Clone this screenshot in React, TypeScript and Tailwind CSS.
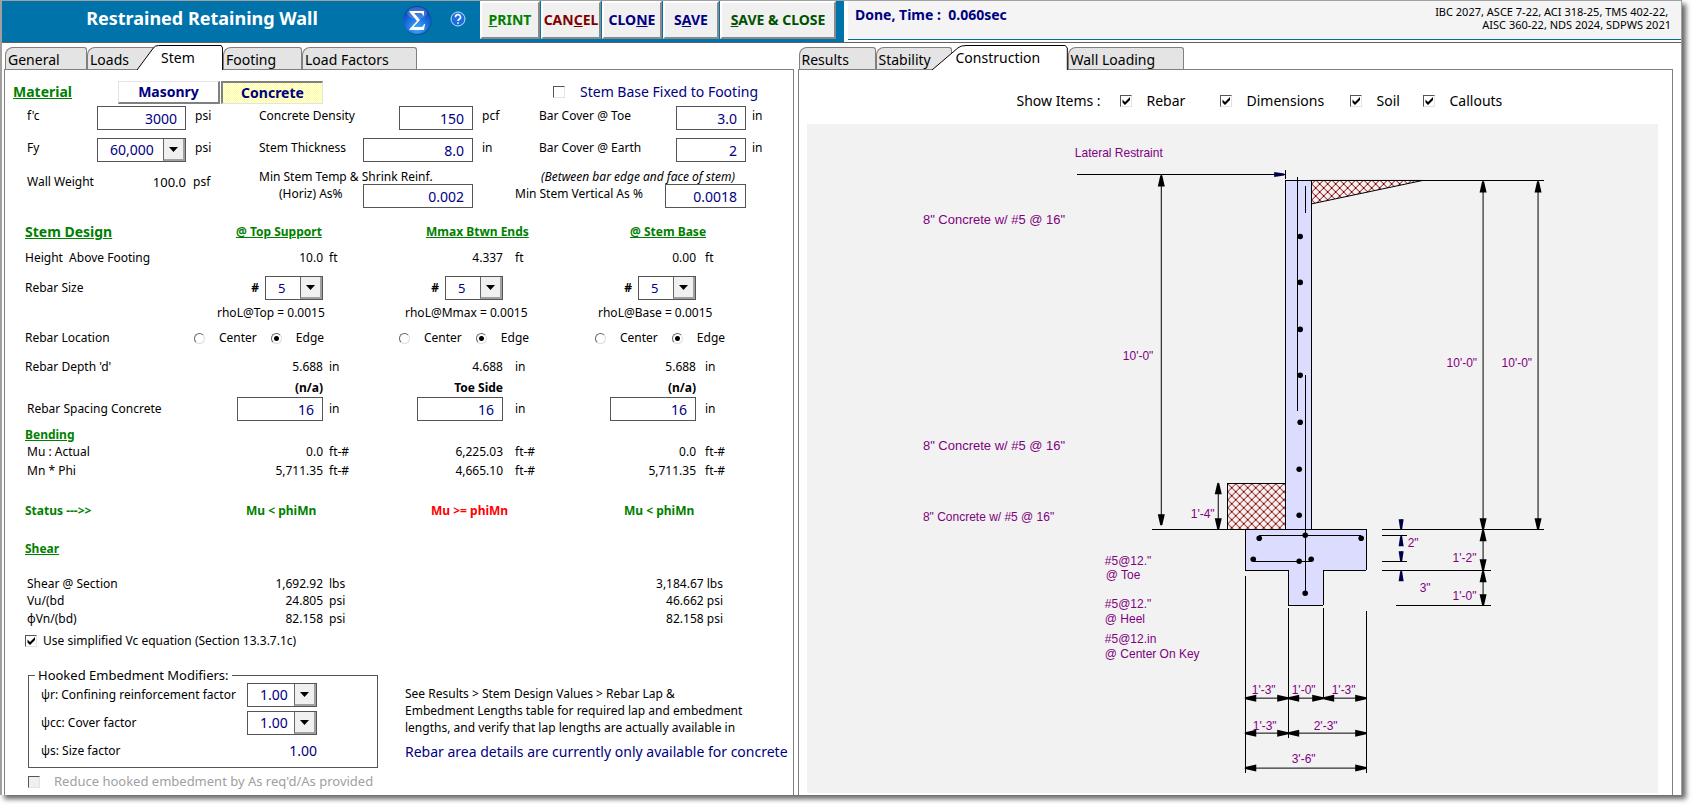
import React, { useState } from 'react';

const FIELD = 'h-6 border border-[#555] bg-white pr-2 text-right text-sm text-[#000080] outline-none';

// Text box with a label tied to it through aria-label
function Field({ label, value, className }: any) {
    return <input aria-label={label} defaultValue={value} className={`${FIELD} ${className}`} />;
}

// Drop-down with the classic raised arrow button
function Combo({ label, value, className, size = 'text-sm' }: any) {
    return (
        <span className={`relative inline-flex h-6 border border-[#555] bg-white ${className}`}>
            <select aria-label={label} defaultValue={value} className={`w-full appearance-none bg-transparent pl-3 text-[#000080] outline-none ${size}`}>
                <option>{value}</option>
            </select>
            <span className="pointer-events-none absolute inset-y-0 right-0 flex w-[22px] items-center justify-center border-b-2 border-l border-r-2 border-b-[#a0a0a0] border-l-[#666] border-r-[#a0a0a0] bg-[#f0f0f0]">
                <svg width="9" height="5" viewBox="0 0 9 5"><path d="M0 0h9L4.5 5z" /></svg>
            </span>
        </span>
    );
}

function Check({ label, checked = false, disabled = false, className = '' }: any) {
    return (
        <label className={`flex items-center ${className}`}>
            <span className="relative flex">
                <input
                    type="checkbox"
                    defaultChecked={checked}
                    disabled={disabled}
                    className="peer h-3 w-3 appearance-none border border-b-[#e3e3e3] border-l-[#555] border-r-[#e3e3e3] border-t-[#555] bg-white disabled:bg-[#f0f0f0]"
                />
                <svg className="pointer-events-none absolute inset-0 hidden peer-checked:block" width="12" height="12" viewBox="0 0 12 12">
                    <path d="M2.5 4.5v3L5 10l5-5V2L5 7z" />
                </svg>
            </span>
            <span>{label}</span>
        </label>
    );
}

function Radio({ name, label, checked = false }: any) {
    return (
        <label className="flex items-center gap-[14px]">
            <input
                type="radio"
                name={name}
                defaultChecked={checked}
                className="h-[11px] w-[11px] appearance-none rounded-full border border-b-[#ddd] border-l-[#666] border-r-[#ddd] border-t-[#666] bg-white checked:bg-[radial-gradient(circle,#000_2px,transparent_3px)]"
            />
            {label}
        </label>
    );
}

// Row of tabs; the active one has a slanted left edge over its neighbour
function Tabs({ items, active, onPick }: any) {
    return (
        <div className="flex h-[26px] items-end pl-px text-sm">
            {items.map((t: any) =>
                t.name === active ? (
                    <button key={t.name} onClick={() => onPick(t.name)} className={`relative z-10 -mb-px -ml-5 h-[25px] pl-6 text-left leading-6 ${t.w}`}>
                        <svg className="absolute inset-0 h-full w-full" viewBox="0 0 100 25" preserveAspectRatio="none">
                            <path d="M0 25L19 3Q21 .5 25 .5H98L99.5 3V25" fill="#fff" stroke="#000" vectorEffect="non-scaling-stroke" />
                        </svg>
                        <span className="relative">{t.name}</span>
                    </button>
                ) : (
                    <button
                        key={t.name}
                        onClick={() => onPick(t.name)}
                        className={`h-[22px] whitespace-nowrap rounded-tl-lg rounded-tr-[3px] border border-b-0 border-[#808080] bg-[#e4e4e4] pl-[2px] pt-[2px] text-left leading-5 ${t.w}`}
                    >
                        {t.name}
                    </button>
                )
            )}
        </div>
    );
}

function Header() {
    const btn = 'h-[38px] border-2 border-b-[#8a8a8a] border-l-white border-r-[#8a8a8a] border-t-white bg-[#f0f0f0] text-center text-sm font-bold';
    return (
        <header className="flex h-[42px] border-b border-[#606060]">
            <div className="flex w-[842px] shrink-0 bg-[#0173ab]">
                <h1 className="w-[400px] pt-[3px] text-center text-lg font-bold text-white">Restrained Retaining Wall</h1>
                <button aria-label="Calculate" className="mr-[18px] self-start pt-1">
                    <svg width="30" height="30" viewBox="0 0 30 30">
                        <defs>
                            <radialGradient id="ball" cx="50%" cy="80%" r="80%">
                                <stop offset="0" stopColor="#3fa9ff" />
                                <stop offset="0.6" stopColor="#1565d8" />
                                <stop offset="1" stopColor="#0b3fa8" />
                            </radialGradient>
                        </defs>
                        <circle cx="15.500" cy="16" r="14" fill="#07538a" />
                        <circle cx="15" cy="15" r="14" fill="url(#ball)" />
                        <ellipse cx="15" cy="8" rx="10" ry="6" fill="#fff" opacity="0.18" />
                        <path d="M7.500 6H22v4.500h-1C20.500 8.500 19.500 8 18 8h-6l6 7-6.500 7H19c1.700 0 2.500-1 3-3h1L22 25H7.500v-1L15 16 7.500 7z" fill="#fff" />
                    </svg>
                </button>
                <button aria-label="Help" className="mr-[14px] self-start pt-[10px]">
                    <svg width="16" height="16" viewBox="0 0 16 16">
                        <circle cx="8" cy="8" r="7" fill="#1c6fe0" stroke="#bfe0ff" />
                        <path d="M5.500 6.200a2.500 2.500 0 1 1 3.700 2.100Q8 9 8 10M8 11.300v1.400" fill="none" stroke="#fff" strokeWidth="1.600" />
                    </svg>
                </button>
                <div className="flex gap-px">
                    <button className={`${btn} w-[60px] text-[#008000]`}><u>P</u>RINT</button>
                    <button className={`${btn} w-[60px] text-[#800000]`}>CAN<u>C</u>EL</button>
                    <button className={`${btn} w-[60px] text-[#000080]`}>CLO<u>N</u>E</button>
                    <button className={`${btn} w-[56px] text-[#000080]`}>S<u>A</u>VE</button>
                    <button className={`${btn} w-[116px] text-[#005000]`}><u>S</u>AVE &amp; CLOSE</button>
                </div>
            </div>
            <div className="mb-[2px] ml-1 flex flex-1 justify-between border-b border-[#0b6a8f] bg-[#f4f4f4] pl-[7px] pr-[10px]">
                <p className="whitespace-pre pt-1 text-sm font-bold text-[#000080]">Done, Time :  0.060sec</p>
                <p className="pt-1 text-right text-[11px] leading-[13px]">
                    IBC 2027, ASCE 7-22, ACI 318-25, TMS 402-22,&nbsp;<br />AISC 360-22, NDS 2024, SDPWS 2021
                </p>
            </div>
        </header>
    );
}

function Material() {
    return (
        <section>
            <div className="flex h-[34px] items-center pl-2 pt-[10px]">
                <h2 className="w-[105px] text-sm font-bold text-[#008000] underline">Material</h2>
                <button className="h-[23px] w-[102px] border border-b-2 border-r-2 border-b-[#808080] border-l-[#e3e3e3] border-r-[#808080] border-t-[#e3e3e3] text-sm font-bold text-[#000080]">Masonry</button>
                <button className="ml-px h-[23px] w-[102px] border border-l-2 border-t-2 border-b-[#e3e3e3] border-l-[#808080] border-r-[#e3e3e3] border-t-[#808080] bg-[repeating-conic-gradient(#ffff80_0_25%,#ffffff_0_50%)] bg-[length:2px_2px] text-sm font-bold text-[#000080]">Concrete</button>
                <Check label="Stem Base Fixed to Footing" className="ml-[230px] gap-[15px] text-sm text-[#000080]" />
            </div>
            <div className="flex pl-[22px] pt-[2px] leading-5">
                <div className="flex w-[232px] flex-col gap-2">
                    <div className="flex h-6 items-start">
                        <span className="w-[70px]">f'c</span>
                        <Field label="f'c" value="3000" className="w-[89px]" />
                        <span className="pl-[9px]">psi</span>
                    </div>
                    <div className="flex h-6 items-start">
                        <span className="w-[70px]">Fy</span>
                        <Combo label="Fy" value="60,000" className="w-[89px]" />
                        <span className="pl-[9px]">psi</span>
                    </div>
                    <div className="flex h-6 items-center">
                        <span className="w-[90px]">Wall Weight</span>
                        <span className="w-[69px] text-right text-[13px]">100.0</span>
                        <span className="pl-[7px]">psf</span>
                    </div>
                </div>
                <div className="flex w-[256px] flex-col gap-2">
                    <div className="flex h-6 items-start">
                        <span className="w-[140px]">Concrete Density</span>
                        <Field label="Concrete Density" value="150" className="w-[74px]" />
                        <span className="pl-[9px]">pcf</span>
                    </div>
                    <div className="flex h-6 items-start">
                        <span className="w-[104px]">Stem Thickness</span>
                        <Field label="Stem Thickness" value="8.0" className="w-[110px]" />
                        <span className="pl-[9px]">in</span>
                    </div>
                    <div>
                        <p className="leading-[14px]">Min Stem Temp &amp; Shrink Reinf.</p>
                        <div className="flex">
                            <span className="w-[104px] pl-5">(Horiz) As%</span>
                            <Field label="Min stem horizontal As%" value="0.002" className="w-[110px]" />
                        </div>
                    </div>
                </div>
                <div className="flex flex-1 flex-col gap-2">
                    <div className="flex h-6 items-start pl-6">
                        <span className="w-[137px]">Bar Cover @ Toe</span>
                        <Field label="Bar Cover @ Toe" value="3.0" className="w-[70px]" />
                        <span className="pl-[6px]">in</span>
                    </div>
                    <div className="flex h-6 items-start pl-6">
                        <span className="w-[137px]">Bar Cover @ Earth</span>
                        <Field label="Bar Cover @ Earth" value="2" className="w-[70px]" />
                        <span className="pl-[6px]">in</span>
                    </div>
                    <div>
                        <p className="pl-[26px] italic leading-[14px]">(Between bar edge and face of stem)</p>
                        <div className="flex">
                            <span className="w-[150px]">Min Stem Vertical As %</span>
                            <Field label="Min Stem Vertical As %" value="0.0018" className="w-[81px]" />
                        </div>
                    </div>
                </div>
            </div>
        </section>
    );
}

const columns = [
    { id: 'top', title: '@ Top Support', rho: 'rhoL@Top = 0.0015', height: '10.0', depth: '5.688', tag: '(n/a)', pad: 'pl-[46px]', rhoPad: 'pl-[27px]', radioPad: 'pl-1' },
    { id: 'mmax', title: 'Mmax Btwn Ends', rho: 'rhoL@Mmax = 0.0015', height: '4.337', depth: '4.688', tag: 'Toe Side', pad: 'pl-[31px]', rhoPad: 'pl-[10px]', radioPad: 'pl-1' },
    { id: 'base', title: '@ Stem Base', rho: 'rhoL@Base = 0.0015', height: '0.00', depth: '5.688', tag: '(n/a)', pad: 'pl-[42px]', rhoPad: 'pl-[10px]', radioPad: 'pl-[7px]' },
];

const unitPad = ['pl-[6px]', 'pl-3', 'pl-[9px]'];

// One label followed by three value + unit pairs
function ValueRow({ label, values, unit, className, indent = '' }: any) {
    return (
        <tr className={className}>
            <th className={`text-left font-normal ${indent}`}>{label}</th>
            {values.map((v: any, i: number) => (
                <React.Fragment key={i}>
                    <td className="text-right">{v}</td>
                    <td className={unitPad[i]}>{v && unit}</td>
                </React.Fragment>
            ))}
        </tr>
    );
}

function ShearRow({ label, top, base, className }: any) {
    return (
        <tr className={className}>
            <th className="pl-[2px] text-left font-normal">{label}</th>
            <td className="text-right">{top[0]}</td>
            <td className="pl-[6px]">{top[1]}</td>
            <td colSpan={2}></td>
            <td colSpan={2}><div className="w-[135px] text-right">{base}</div></td>
        </tr>
    );
}

function StemDesign() {
    return (
        <table className="ml-5 mt-3 w-[760px] table-fixed whitespace-nowrap leading-4">
            <colgroup>
                <col className="w-[165px]" />
                <col className="w-[133px]" />
                <col className="w-[72px]" />
                <col className="w-[108px]" />
                <col className="w-[85px]" />
                <col className="w-[108px]" />
                <col />
            </colgroup>
            <tbody>
                <tr className="h-6 text-[#008000]">
                    <th className="text-left text-sm font-bold underline">Stem Design</th>
                    {columns.map((c) => (
                        <th key={c.id} colSpan={2} className={`text-left font-bold underline ${c.pad}`}>{c.title}</th>
                    ))}
                </tr>
                <ValueRow label={<>Height&nbsp; Above Footing</>} values={columns.map((c) => c.height)} unit="ft" className="h-7" />
                <tr className="h-8">
                    <th className="text-left font-normal">Rebar Size</th>
                    {columns.map((c) => (
                        <React.Fragment key={c.id}>
                            <td>
                                <div className="flex items-center justify-end gap-[6px]">
                                    <b>#</b>
                                    <Combo label={`Rebar size ${c.title}`} value="5" size="text-[13px]" className="w-[58px]" />
                                </div>
                            </td>
                            <td></td>
                        </React.Fragment>
                    ))}
                </tr>
                <tr className="h-[17px]">
                    <td></td>
                    {columns.map((c) => (
                        <td key={c.id} colSpan={2} className={c.rhoPad}>{c.rho}</td>
                    ))}
                </tr>
                <tr className="h-[34px]">
                    <th className="text-left font-normal">Rebar Location</th>
                    {columns.map((c) => (
                        <td key={c.id} colSpan={2} className={c.radioPad}>
                            <div className="flex gap-[14px]">
                                <Radio name={c.id} label="Center" />
                                <Radio name={c.id} label="Edge" checked />
                            </div>
                        </td>
                    ))}
                </tr>
                <ValueRow label="Rebar Depth 'd'" values={columns.map((c) => c.depth)} unit="in" className="h-[23px]" />
                <tr className="h-[19px]">
                    <td></td>
                    {columns.map((c) => (
                        <React.Fragment key={c.id}>
                            <td className="text-right font-bold">{c.tag}</td>
                            <td></td>
                        </React.Fragment>
                    ))}
                </tr>
                <ValueRow
                    label="Rebar Spacing Concrete"
                    indent="pl-[2px]"
                    values={columns.map((c) => <Field key={c.id} label={`Rebar spacing ${c.title}`} value="16" className="w-[86px] align-top" />)}
                    unit="in"
                    className="h-6"
                />
                <tr className="h-[22px] align-bottom text-[#008000]">
                    <th colSpan={7} className="text-left font-bold underline">Bending</th>
                </tr>
                <ValueRow label="Mu : Actual" indent="pl-[2px]" values={['0.0', '6,225.03', '0.0']} unit="ft-#" className="h-[18px]" />
                <ValueRow label="Mn * Phi" indent="pl-[2px]" values={['5,711.35', '4,665.10', '5,711.35']} unit="ft-#" className="h-5" />
                <tr className="h-[59px] text-left text-[#008000]">
                    <th className="font-bold">Status ---&gt;&gt;</th>
                    <th colSpan={2} className="pl-14 font-bold">Mu &lt; phiMn</th>
                    <th colSpan={2} className="pl-9 font-bold text-[#ff0000]">Mu &gt;= phiMn</th>
                    <th colSpan={2} className="pl-9 font-bold">Mu &lt; phiMn</th>
                </tr>
                <tr className="h-[18px] text-[#008000]">
                    <th colSpan={7} className="text-left font-bold underline">Shear</th>
                </tr>
                <ShearRow label="Shear @ Section" top={['1,692.92', 'lbs']} base="3,184.67 lbs" className="h-[34px] align-bottom" />
                <ShearRow label="Vu/(bd" top={['24.805', 'psi']} base="46.662 psi" className="h-[18px]" />
                <ShearRow label="φVn/(bd)" top={['82.158', 'psi']} base="82.158 psi" className="h-[17px]" />
            </tbody>
        </table>
    );
}

function Embedment() {
    return (
        <section className="pl-5 pt-[2px]">
            <Check label="Use simplified Vc equation (Section 13.3.7.1c)" checked className="h-6 gap-[6px]" />
            <div className="flex gap-[27px] pl-[3px] pt-[14px]">
                <fieldset className="h-[101px] w-[350px] shrink-0 border border-[#555] pl-3">
                    <legend className="-ml-[6px] px-[3px] text-[13px] leading-4">Hooked Embedment Modifiers:</legend>
                    <div className="flex h-6 items-center">
                        <span className="w-[206px]">ψr: Confining reinforcement factor</span>
                        <Combo label="Confining reinforcement factor" value="1.00" className="w-[70px]" />
                    </div>
                    <div className="mt-1 flex h-6 items-center">
                        <span className="w-[206px]">ψcc: Cover factor</span>
                        <Combo label="Cover factor" value="1.00" className="w-[70px]" />
                    </div>
                    <div className="mt-1 flex h-6 items-center">
                        <span className="w-[206px]">ψs: Size factor</span>
                        <span className="w-[70px] text-right text-sm text-[#000080]">1.00</span>
                    </div>
                </fieldset>
                <div className="whitespace-nowrap pt-[18px] leading-[17px]">
                    <p>
                        See Results &gt; Stem Design Values &gt; Rebar Lap &amp;<br />
                        Embedment Lengths table for required lap and embedment<br />
                        lengths, and verify that lap lengths are actually available in
                    </p>
                    <p className="mt-[6px] text-sm text-[#000080]">Rebar area details are currently only available for concrete</p>
                </div>
            </div>
            <Check label="Reduce hooked embedment by As req'd/As provided" disabled className="mt-[2px] h-6 gap-[14px] pl-[3px] text-[13px] text-[#a0a0a0]" />
        </section>
    );
}

// Arrowhead with its tip at x,y, pointing along the angle (0 = right)
function Head({ x, y, a, small }: any) {
    return (
        <polygon
            points={small ? '0,-1 -10,-2.500 -10,2.500 0,1' : '0,-1 -11,-3.500 -11,3.500 0,1'}
            transform={`translate(${x + 0.5} ${y + 0.5}) rotate(${a})`}
            fill={small ? '#00004a' : '#000'}
            stroke="none"
        />
    );
}

function HDim({ x1, x2, y }: any) {
    return <><path d={`M${x1} ${y}.5H${x2}`} /><Head x={x1} y={y} a={180} /><Head x={x2} y={y} a={0} /></>;
}

function VDim({ x, y1, y2 }: any) {
    return <><path d={`M${x}.5 ${y1}V${y2}`} /><Head x={x} y={y1} a={-90} /><Head x={x} y={y2} a={90} /></>;
}

const notes: [number, number, string, number?][] = [
    [1075, 157, 'Lateral Restraint'],
    [923, 224, '8" Concrete w/ #5 @ 16"', 13],
    [923, 450, '8" Concrete w/ #5 @ 16"', 13],
    [923, 521, '8" Concrete w/ #5 @ 16"'],
    [1105, 565, '#5@12."'],
    [1106, 579, '@ Toe'],
    [1105, 608, '#5@12."'],
    [1105, 623, '@ Heel'],
    [1105, 643, '#5@12.in'],
    [1105, 658, '@ Center On Key'],
    [1123, 360, `10'-0"`],
    [1447, 367, `10'-0"`],
    [1502, 367, `10'-0"`],
    [1191, 518, `1'-4"`],
    [1408, 547, '2"'],
    [1453, 562, `1'-2"`],
    [1420, 592, '3"'],
    [1453, 600, `1'-0"`],
    [1252, 694, `1'-3"`],
    [1292, 694, `1'-0"`],
    [1332, 694, `1'-3"`],
    [1253, 730, `1'-3"`],
    [1314, 730, `2'-3"`],
    [1292, 763, `3'-6"`],
];

const dots = [
    [1300, 236], [1300, 282], [1300, 329], [1300, 375], [1300, 422], [1299, 469], [1299, 515],
    [1305, 535], [1259, 538], [1361, 538], [1253, 559], [1311, 559], [1299, 561], [1305, 593],
];

function WallDrawing() {
    return (
        <svg className="h-full w-full bg-[#f2f2f2]" viewBox="807 124 852 669" preserveAspectRatio="xMidYMin meet">
            <defs>
                <pattern id="soil" width="8" height="8" patternUnits="userSpaceOnUse">
                    <rect width="8" height="8" fill="#f6f0f0" />
                    <path d="M0 0L8 8M8 0L0 8" stroke="#800000" />
                </pattern>
            </defs>
            <g fill="none" stroke="none">
                <path d="M1311.500 180.500H1423L1311.500 204z" fill="url(#soil)" stroke="#000" />
                <g stroke="#000" shapeRendering="crispEdges">
                    <rect x="1227.500" y="483.500" width="58" height="46" fill="url(#soil)" />
                    <rect x="1285.500" y="180.500" width="26" height="349" fill="#dcdcff" />
                    <path d="M1245.500 529.500H1366.500V570.500H1323.500V605.500H1288.500V570.500H1245.500z" fill="#dcdcff" />
                    <path d="M1285 180.500H1544M1152 529.500H1366M1077 174.500H1285M1285.500 170V179" />
                    <path d="M1297.500 177V411M1305.500 186V213M1305.500 375V593" />
                    <path d="M1259 535.500H1361M1253 561.500H1311" />
                    <path d="M1382 529.500H1544M1382 535.500H1407M1382 561.500H1407M1382 570.500H1491M1396 605.500H1491" />
                    <path d="M1245.500 576V773M1288.500 608V738M1323.500 608V698M1366.500 611V773" />
                    <path d="M1401.500 519V529M1401.500 536V546M1401.500 551V561M1401.500 571V581" />
                </g>
                <g stroke="#000">
                    <VDim x={1161} y1={175} y2={525} />
                    <VDim x={1483} y1={181} y2={529} />
                    <VDim x={1538} y1={181} y2={529} />
                    <VDim x={1483} y1={530} y2={570} />
                    <VDim x={1483} y1={571} y2={605} />
                    <VDim x={1218} y1={483} y2={529} />
                    <HDim x1={1245} x2={1288} y={698} />
                    <HDim x1={1288} x2={1323} y={698} />
                    <HDim x1={1323} x2={1366} y={698} />
                    <HDim x1={1245} x2={1288} y={733} />
                    <HDim x1={1288} x2={1366} y={733} />
                    <HDim x1={1245} x2={1366} y={768} />
                </g>
                <Head small x={1284} y={174} a={0} />
                <Head small x={1401} y={529} a={90} />
                <Head small x={1401} y={536} a={-90} />
                <Head small x={1401} y={561} a={90} />
                <Head small x={1401} y={571} a={-90} />
                {dots.map(([x, y]) => (
                    <circle key={`${x}-${y}`} cx={x + 0.5} cy={y + 0.5} r="2.800" fill="#000" />
                ))}
            </g>
            <g fill="#800080" fontFamily="'Liberation Sans', Arial, sans-serif">
                {notes.map(([x, y, text, size = 12]) => (
                    <text key={`${x}-${y}`} x={x} y={y} fontSize={size}>{text}</text>
                ))}
            </g>
        </svg>
    );
}

export default function App() {
    const [leftTab, setLeftTab] = useState('Stem');
    const [rightTab, setRightTab] = useState('Construction');

    return (
        <div className="h-screen overflow-hidden bg-white pb-4 pr-[15px] font-['Noto_Sans',sans-serif] text-xs text-black">
            <div className="flex h-full flex-col border-l-2 border-r border-t border-[#a0a0a0] bg-white shadow-[4px_4px_5px_rgba(0,0,0,0.6)]">
                <Header />
                <main className="grid min-h-0 flex-1 grid-cols-[790fr_876fr] gap-1 pl-[2px] pr-2">
                    <div className="flex min-h-0 min-w-0 flex-col">
                        <Tabs
                            active={leftTab}
                            onPick={setLeftTab}
                            items={[
                                { name: 'General', w: 'w-[82px]' },
                                { name: 'Loads', w: 'w-[70px]' },
                                { name: 'Stem', w: 'w-[86px]' },
                                { name: 'Footing', w: 'w-[79px]' },
                                { name: 'Load Factors', w: 'w-[115px]' },
                            ]}
                        />
                        <div className="min-h-0 flex-1 border border-b-0 border-[#808080]">
                            <Material />
                            <StemDesign />
                            <Embedment />
                        </div>
                    </div>
                    <div className="flex min-h-0 min-w-0 flex-col">
                        <Tabs
                            active={rightTab}
                            onPick={setRightTab}
                            items={[
                                { name: 'Results', w: 'w-[77px]' },
                                { name: 'Stability', w: 'w-[76px]' },
                                { name: 'Construction', w: 'w-[136px]' },
                                { name: 'Wall Loading', w: 'w-[116px]' },
                            ]}
                        />
                        <div className="flex min-h-0 flex-1 flex-col border border-b-0 border-[#808080] pb-[2px] pl-2 pr-[14px]">
                            <div className="flex h-[54px] shrink-0 items-center pl-[210px] pt-2 text-sm">
                                <span className="w-[103px]">Show Items :</span>
                                <Check label="Rebar" checked className="w-[100px] gap-[15px]" />
                                <Check label="Dimensions" checked className="w-[130px] gap-[15px]" />
                                <Check label="Soil" checked className="w-[73px] gap-[15px]" />
                                <Check label="Callouts" checked className="gap-[15px]" />
                            </div>
                            <div className="min-h-0 flex-1">
                                <WallDrawing />
                            </div>
                        </div>
                    </div>
                </main>
            </div>
        </div>
    );
}
